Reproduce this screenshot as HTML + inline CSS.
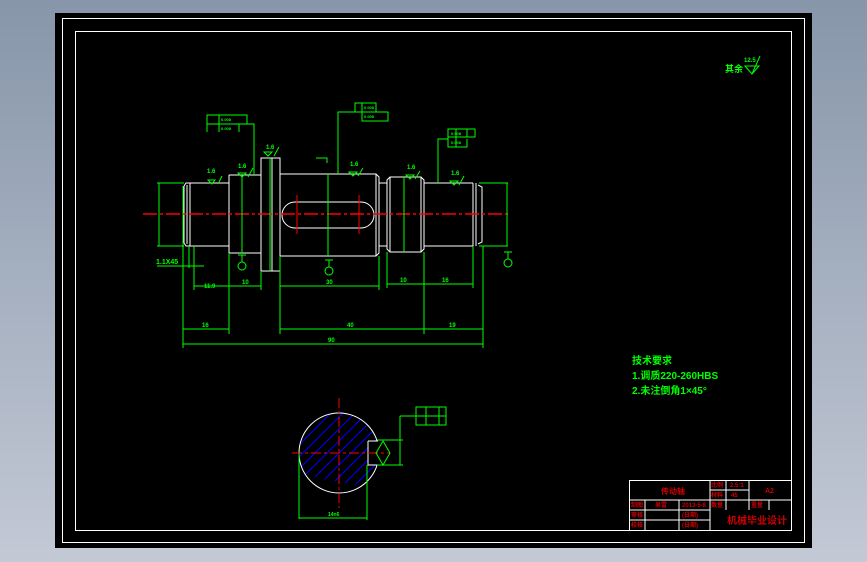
<!DOCTYPE html>
<html><head><meta charset="utf-8"><style>
html,body{margin:0;padding:0;width:867px;height:562px;overflow:hidden;background:linear-gradient(#8796aa,#c3c9d5);}
svg{position:absolute;left:0;top:0}
text{font-family:"Liberation Sans","Noto Sans CJK SC",sans-serif;font-weight:bold}
</style></head><body>
<svg width="867" height="562" viewBox="0 0 867 562">
<rect x="55" y="13" width="757" height="535" fill="#000"/>
<rect x="62.5" y="18.5" width="742" height="524" fill="none" stroke="#fff" stroke-width="1"/>
<rect x="75.5" y="31.5" width="716" height="499" fill="none" stroke="#fff" stroke-width="1"/>

<g fill="none" stroke="#fff" stroke-width="1">
<path d="M184 186 L186 183 L229 183 M184 243 L186 246 L229 246 M184 186 V243 M187 185 V244 M190 183 V246"/>
<path d="M229 175 H261 M229 253 H261 M229 175 V253"/>
<path d="M261 158 H280 V271 H261 Z M272 158 V271"/>
<path d="M280 174 H376 L379 177 V253 L376 256 H280 M376 174 V256"/>
<path d="M379 183 H387 M379 246 H387"/>
<path d="M387 180 L390 177 H421 L424 180 V249 L421 252 H390 L387 249 Z M390 177 V252 M421 177 V252"/>
<path d="M424 183 H473 M424 246 H473 M473 183 V246 M476 183 V246 M478 185 L482 187 V242 L478 244"/>
<path d="M295 202 H361 A13 13 0 0 1 361 228 H295 A13 13 0 0 1 295 202 Z"/>
</g>
<line x1="143" y1="214" x2="510" y2="214" stroke="#f00" stroke-width="1.5" stroke-dasharray="14,3,3,3"/>
<g stroke="#f00" stroke-width="1"><line x1="297" y1="195" x2="297" y2="234"/><line x1="359" y1="195" x2="359" y2="234"/></g>

<g fill="none" stroke="#0f0" stroke-width="1">
<path d="M157 183 H184 M157 246 H184 M159 183 V246"/>
<path d="M508 183 H479 M508 246 H479 M507 183 V246"/>
<path d="M242 175 V253 M270 158 V271 M328 174 V256 M404 177 V252"/>
<path d="M183 186 V348 M229 253 V334 M280 256 V334 M424 252 V334 M483 246 V348 M194 246 V290 M261 271 V290 M379 256 V290 M387 252 V288 M473 246 V288 M189 246 V268"/>
<path d="M194 286 H261 M280 286 H379 M387 284 H473"/>
<path d="M183 329 H229 M280 329 H424 M424 329 H483 M183 344 H483"/>
<path d="M157 266 H204"/>
<path d="M254 175 V124 H207 V132 M247 124 V115 H207 V132 M219 115 V132 M239 124 V132"/>
<path d="M338 174 V112 H362 V121 H388 V112 H355 V103 H376 V112 M362 103 V121"/>
<path d="M438 183 V139 H448 V129 H475 V137 H448 V147 H467 V139 M456 129 V147 M467 129 V137"/>
<path d="M316 158 H327 V163"/>
<circle cx="242" cy="266" r="4"/><path d="M242 255 V262 M238 255 H246"/>
<circle cx="329" cy="271" r="4"/><path d="M329 260 V267 M325 260 H333"/>
<circle cx="508" cy="263" r="4"/><path d="M508 252 V259 M504 252 H512"/>
<path d="M208 180 L215 180 L212 184 Z M218 184 L222 176 M238 173 L246 173 L242 177 Z M248 177 L253 168 M264 152 L272 152 L268 156 Z M274 156 L279 147 M349 172 L357 172 L353 176 Z M358 176 L363 168 M406 175 L414 175 L410 179 Z M415 179 L420 171 M450 181 L458 181 L454 185 Z M459 185 L464 176"/>
<path d="M745 66 L752 74 L759 66 Z M752 74 L760 56"/>
</g>
<g fill="#0f0" font-size="6">
<text x="207" y="173">1.6</text><text x="238" y="168">1.6</text><text x="266" y="149">1.6</text><text x="350" y="166">1.6</text><text x="407" y="169">1.6</text><text x="451" y="175">1.6</text>
<text x="204" y="288">11.9</text><text x="242" y="284">10</text><text x="326" y="284">30</text><text x="400" y="282">10</text><text x="442" y="282">16</text>
<text x="202" y="327">16</text><text x="347" y="327">40</text><text x="449" y="327">19</text><text x="328" y="342">90</text>
<text x="156" y="264" font-size="7">1.1X45</text>
<text x="221" y="121" font-size="4">0.008</text><text x="221" y="130" font-size="4">0.008</text><text x="364" y="109" font-size="4">0.008</text><text x="364" y="118" font-size="4">0.008</text><text x="451" y="135" font-size="4">0.008</text><text x="451" y="144" font-size="4">0.008</text>
<text x="744" y="62" font-size="6">12.5</text>
<text x="725" y="72" font-size="9">其余</text>
<text x="632" y="364" font-size="10">技术要求</text>
<text x="632" y="379" font-size="10">1.调质220-260HBS</text>
<text x="632" y="394" font-size="10">2.未注倒角1×45°</text>
</g>

<!-- section -->
<defs><clipPath id="c"><circle cx="339" cy="453" r="40"/></clipPath></defs>
<g clip-path="url(#c)" stroke="#00f" stroke-width="1">
<path d="M280 440 L340 380 M280 452 L350 382 M280 464 L360 384 M285 471 L370 386 M295 473 L380 388 M305 475 L390 390 M315 477 L390 402 M325 479 L390 414 M335 481 L390 426 M345 483 L390 438 M355 485 L390 450"/>
</g>
<circle cx="339" cy="453" r="40" fill="none" stroke="#fff" stroke-width="1"/>
<rect x="368" y="441" width="14" height="24" fill="#000"/>
<path d="M368 441 H378 M368 441 V465 H378" fill="none" stroke="#fff"/>
<line x1="292" y1="453" x2="390" y2="453" stroke="#f00" stroke-dasharray="10,3,3,3"/>
<line x1="339" y1="398" x2="339" y2="508" stroke="#f00" stroke-dasharray="10,3,3,3"/>
<g fill="none" stroke="#0f0">
<path d="M299 453 V519 M367 465 V520 M299 518 H367 M377 440 H403 M377 465 H403 M400 416 V465 M400 416 H416 M416 407 H446 V425 H416 Z M416 416 H446 M426 407 V425 M439 407 V425"/>
<path d="M383 441 L376 453 L383 465 L390 453 Z"/>
</g>
<text x="328" y="516" fill="#0f0" font-size="5">14n6</text>

<g fill="none" stroke="#fff" stroke-width="1">
<rect x="629.5" y="480.5" width="162" height="50"/>
<path d="M629 500 H791 M629 510 H710 M629 520 H710 M710 480 V530 M726 480 V510 M749 480 V510 M769 500 V510 M710 490 H749 M645 500 V530 M679 500 V530"/>
</g>
<g fill="#c00" font-size="6">
<text x="661" y="494" font-size="8">传动轴</text><text x="711" y="487">比例</text><text x="730" y="487">2.5:1</text><text x="765" y="493" font-size="7">A2</text>
<text x="711" y="497">材料</text><text x="731" y="497">45</text>
<text x="631" y="507">制图</text><text x="655" y="507">吴雷</text><text x="682" y="507">2013-5-8</text><text x="711" y="507">数量</text><text x="751" y="507">重量</text>
<text x="631" y="517">审核</text><text x="682" y="517">(日期)</text><text x="631" y="527">校核</text><text x="682" y="527">(日期)</text>
<text x="727" y="524" font-size="10">机械毕业设计</text>
</g>
</svg>
</body></html>
